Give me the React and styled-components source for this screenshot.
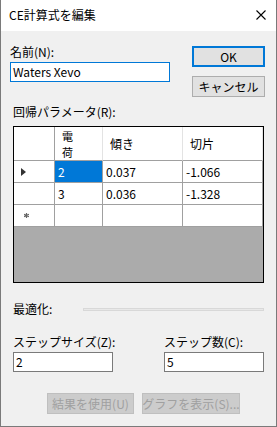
import styled, { createGlobalStyle } from 'styled-components'

const GlobalStyle = createGlobalStyle`
  html, body {
    margin: 0;
    padding: 0;
    background: #fff;
  }
  body {
    font-family: "Noto Sans CJK JP", "Liberation Sans", sans-serif;
    font-size: 12px;
    color: #000;
  }
`

const rows = [
    { charge: '2', slope: '0.037', intercept: '-1.066', current: true },
    { charge: '3', slope: '0.036', intercept: '-1.328' },
]

const App = () => {

    return (
        <>
            <GlobalStyle />
            <Window>
                <TitleBar>
                    <Title>CE計算式を編集</Title>
                    <svg width="10" height="10" viewBox="0 0 10 10">
                        <path d="M0.5 0.5 L9.5 9.5 M9.5 0.5 L0.5 9.5" stroke="#000" strokeWidth="1.1" fill="none" />
                    </svg>
                </TitleBar>

                <Body>
                    <TopRow>
                        <NameCol>
                            <Label>名前(N):</Label>
                            <Field focused>Waters Xevo</Field>
                        </NameCol>
                        <ButtonCol>
                            <Button primary>OK</Button>
                            <Button>キャンセル</Button>
                        </ButtonCol>
                    </TopRow>

                    <SectionLabel>回帰パラメータ(R):</SectionLabel>

                    <Grid>
                        <HeaderCell corner />
                        <HeaderCell>
                            <Stacked>
                                <span>電</span>
                                <span>荷</span>
                            </Stacked>
                        </HeaderCell>
                        <HeaderCell>傾き</HeaderCell>
                        <HeaderCell>切片</HeaderCell>

                        {rows.map((row) =>
                            <Row key={row.charge}>
                                <RowHeader>
                                    {row.current &&
                                        <svg width="5" height="8" viewBox="0 0 5 8">
                                            <path d="M0 0 L5 4 L0 8 Z" fill="#333" />
                                        </svg>
                                    }
                                </RowHeader>
                                <Cell selected={row.current}>{row.charge}</Cell>
                                <Cell>{row.slope}</Cell>
                                <Cell>{row.intercept}</Cell>
                            </Row>
                        )}

                        <RowHeader newRow>
                            <svg width="5" height="5" viewBox="0 0 5 5">
                                <path d="M2.5 0 V5 M0 1.2 L5 3.8 M5 1.2 L0 3.8" stroke="#666" strokeWidth="1.2" />
                            </svg>
                        </RowHeader>
                        <Cell />
                        <Cell />
                        <Cell />
                    </Grid>

                    <OptRow>
                        <OptLabel>最適化:</OptLabel>
                        <Groove />
                    </OptRow>

                    <StepRow>
                        <StepField>
                            <Label>ステップサイズ(Z):</Label>
                            <Field>2</Field>
                        </StepField>
                        <StepField>
                            <Label>ステップ数(C):</Label>
                            <Field>5</Field>
                        </StepField>
                    </StepRow>

                    <BottomRow>
                        <DisabledButton width={87}>結果を使用(U)</DisabledButton>
                        <DisabledButton width={98}>グラフを表示(S)...</DisabledButton>
                    </BottomRow>
                </Body>
            </Window>
        </>
    )
}

export default App

const Window = styled.div`
    width: 277px;
    height: 427px;
    box-sizing: border-box;
    border: 1px solid #7a7a7a;
    border-top: none;
    display: flex;
    flex-direction: column;
    background: #f0f0f0;
`

const TitleBar = styled.div`
    height: 31px;
    flex-shrink: 0;
    background: #fff;
    display: flex;
    align-items: center;
    justify-content: space-between;
    padding: 0 10px 2px 8px;
    box-sizing: border-box;
`

const Title = styled.span`
    font-size: 12px;
    line-height: 16px;
`

const Body = styled.div`
    flex: 1;
    display: flex;
    flex-direction: column;
`

const TopRow = styled.div`
    display: flex;
    padding-left: 9px;
`

const NameCol = styled.div`
    width: 160px;
    padding-top: 14px;
`

const Label = styled.div`
    line-height: 14px;
    height: 14px;
    margin-bottom: 3px;
    white-space: nowrap;
`

const Field = styled.div`
    height: 20px;
    box-sizing: border-box;
    background: #fff;
    border: 1px solid ${props => props.focused ? '#0078d7' : '#7a7a7a'};
    padding: 0 2px;
    line-height: 18px;
`

const ButtonCol = styled.div`
    margin-left: 22px;
    padding-top: 15px;
    display: flex;
    flex-direction: column;
    gap: 9px;
`

const Button = styled.div`
    width: 73px;
    height: 21px;
    box-sizing: border-box;
    background: #e1e1e1;
    border: ${props => props.primary ? '2px solid #0078d7' : '1px solid #adadad'};
    display: flex;
    align-items: center;
    justify-content: center;
    line-height: 14px;
`

const SectionLabel = styled.div`
    margin: 8px 0 0 12px;
    line-height: 14px;
    height: 14px;
`

const Grid = styled.div`
    margin: 7px 0 0 12px;
    width: 251px;
    height: 157px;
    box-sizing: border-box;
    border: 1px solid #000;
    background: #ababab;
    display: grid;
    grid-template-columns: 41px 48px 80px 80px;
    grid-template-rows: 34px 22px 22px 22px;
    align-content: start;
`

const Row = styled.div`
    display: contents;
`

const CellBase = styled.div`
    box-sizing: border-box;
    background: #fff;
    border-right: 1px solid #a0a0a0;
    border-bottom: 1px solid #a0a0a0;
    display: flex;
    align-items: center;
    overflow: hidden;
`

const HeaderCell = styled(CellBase)`
    padding-left: 7px;
    line-height: 14px;
    border-right-color: ${props => props.corner ? '#a0a0a0' : '#e3e3e3'};
`

const Stacked = styled.div`
    display: flex;
    flex-direction: column;
    font-size: 11px;

    span {
        line-height: 16px;
        height: 16px;
    }
`

const RowHeader = styled(CellBase)`
    padding-left: ${props => props.newRow ? '10px' : '7px'};
`

const Cell = styled(CellBase)`
    padding-left: 3px;
    line-height: 14px;
    background: ${props => props.selected ? '#0078d7' : '#fff'};
    color: ${props => props.selected ? '#fff' : '#000'};
`

const OptRow = styled.div`
    display: flex;
    align-items: center;
    margin: 19px 12px 0 12px;
    height: 14px;
`

const OptLabel = styled.div`
    width: 70px;
    line-height: 14px;
`

const Groove = styled.div`
    flex: 1;
    height: 1px;
    background: #e8e8e8;
    border: 1px solid #d8d8d8;
`

const StepRow = styled.div`
    display: flex;
    gap: 51px;
    margin: 19px 0 0 12px;
`

const StepField = styled.div`
    width: 100px;
`

const BottomRow = styled.div`
    display: flex;
    gap: 8px;
    margin: 21px 0 0 46px;
`

const DisabledButton = styled.div`
    width: ${props => props.width}px;
    height: 21px;
    box-sizing: border-box;
    background: #cccccc;
    border: 1px solid #bfbfbf;
    color: #a0a0a0;
    display: flex;
    align-items: center;
    justify-content: center;
    line-height: 14px;
    white-space: nowrap;
`
